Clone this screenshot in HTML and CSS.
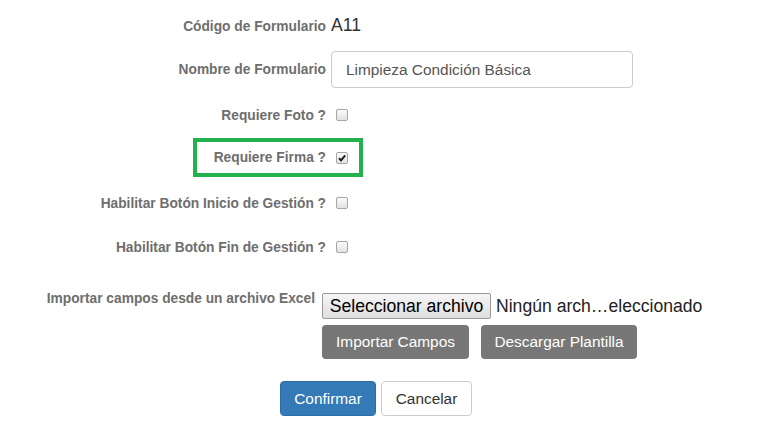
FILE: index.html
```
<!DOCTYPE html>
<html lang="es">
<head>
<meta charset="utf-8">
<link rel="stylesheet" href="styles.css">
</head>
<body>
<form class="form">
  <div class="row row-code">
    <div class="label">Código de Formulario</div>
    <div class="ctrl"><span class="value">A11</span></div>
  </div>
  <div class="row row-name">
    <div class="label">Nombre de Formulario</div>
    <div class="ctrl"><div class="input">Limpieza Condición Básica</div></div>
  </div>
  <div class="row row-foto">
    <div class="label">Requiere Foto ?</div>
    <div class="ctrl"><span class="check"></span></div>
  </div>
  <div class="row row-firma">
    <div class="highlight"></div>
    <div class="label">Requiere Firma ?</div>
    <div class="ctrl"><span class="check checked"><svg viewBox="0 0 12 12" width="12" height="12"><path d="M3 6.2 L5 8.4 L9.2 3.4" fill="none" stroke="#222" stroke-width="2"/></svg></span></div>
  </div>
  <div class="row row-inicio">
    <div class="label">Habilitar Botón Inicio de Gestión ?</div>
    <div class="ctrl"><span class="check"></span></div>
  </div>
  <div class="row row-fin">
    <div class="label">Habilitar Botón Fin de Gestión ?</div>
    <div class="ctrl"><span class="check"></span></div>
  </div>
  <div class="row row-import">
    <div class="label label-import">Importar campos desde un archivo Excel</div>
    <div class="import-ctrl">
      <div class="file">
        <span class="file-btn">Seleccionar archivo</span>
        <span class="file-name">Ningún arch…eleccionado</span>
      </div>
      <div class="btns">
        <span class="btn btn-gray btn-imp">Importar Campos</span>
        <span class="btn btn-gray btn-desc">Descargar Plantilla</span>
      </div>
    </div>
  </div>
  <div class="actions">
    <span class="btn btn-primary">Confirmar</span>
    <span class="btn btn-default">Cancelar</span>
  </div>
</form>
</body>
</html>
```
FILE: styles.css
```
html, body {
  margin: 0;
  padding: 0;
  background: #fff;
  font-family: "Liberation Sans", Arial, sans-serif;
}
.form {
  display: flex;
  flex-direction: column;
  width: 766px;
}
.row {
  display: flex;
  align-items: center;
  position: relative;
}
.label {
  width: 326px;
  text-align: right;
  font-weight: bold;
  font-size: 13.75px;
  color: #6e6e6e;
  flex-shrink: 0;
}
.ctrl {
  margin-left: 5px;
  display: flex;
  align-items: center;
}
.row-code { height: 30px; margin-top: 10px; }
.row-code .label { padding-top: 2px; }
.value { font-size: 17.6px; color: #333; }
.row-name { height: 37px; margin-top: 11px; }
.input {
  width: 286px;
  height: 35px;
  border: 1px solid #ccc;
  border-radius: 4px;
  box-sizing: content-box;
  padding: 0 0 0 14px;
  display: flex;
  align-items: center;
  font-size: 15.4px;
  color: #555;
}
.row-foto { height: 30px; margin-top: 12px; }
.row-firma { height: 39px; margin-top: 8px; }
.row-inicio { height: 30px; margin-top: 11px; }
.row-fin { height: 30px; margin-top: 14px; }
.check {
  margin-left: 5px;
  width: 10px;
  height: 10px;
  border: 1px solid #a6a6a6;
  border-radius: 2px;
  background: linear-gradient(#fafafa, #e4e4e4);
  display: inline-flex;
  align-items: center;
  justify-content: center;
  position: relative;
}
.check svg { position: absolute; left: -1px; top: -1px; }
.highlight {
  position: absolute;
  left: 193px;
  top: 0;
  width: 162px;
  height: 31px;
  border: 4px solid #22b14c;
}
.row-import {
  align-items: flex-start;
  margin-top: 26px;
}
.label-import {
  width: 315px;
  padding-top: 3px;
}
.import-ctrl {
  margin-left: 7px;
  display: flex;
  flex-direction: column;
  padding-top: 5px;
}
.file {
  display: flex;
  align-items: center;
  height: 26px;
}
.file-btn {
  box-sizing: border-box;
  width: 169px;
  height: 26px;
  border: 1px solid #9a9a9a;
  border-radius: 2px;
  background: linear-gradient(#f6f6f6, #dedede);
  font-size: 17.6px;
  color: #000;
  display: flex;
  align-items: center;
  justify-content: center;
}
.file-name {
  margin-left: 5px;
  font-size: 17.6px;
  color: #222;
}
.btns {
  display: flex;
  gap: 12px;
  margin-top: 6px;
}
.btn {
  box-sizing: border-box;
  height: 34px;
  border-radius: 4px;
  font-size: 15.4px;
  display: inline-flex;
  align-items: center;
  justify-content: center;
}
.btn-gray {
  background: #777;
  color: #fff;
}
.btn-imp { width: 147px; }
.btn-desc { width: 156px; }
.actions {
  display: flex;
  gap: 5px;
  margin-top: 22px;
  margin-left: 280px;
}
.btn-primary {
  width: 96px;
  height: 35px;
  background: #337ab7;
  border: 1px solid #2e6da4;
  color: #fff;
}
.btn-default {
  width: 91px;
  height: 35px;
  background: #fff;
  border: 1px solid #ccc;
  color: #333;
}
```
